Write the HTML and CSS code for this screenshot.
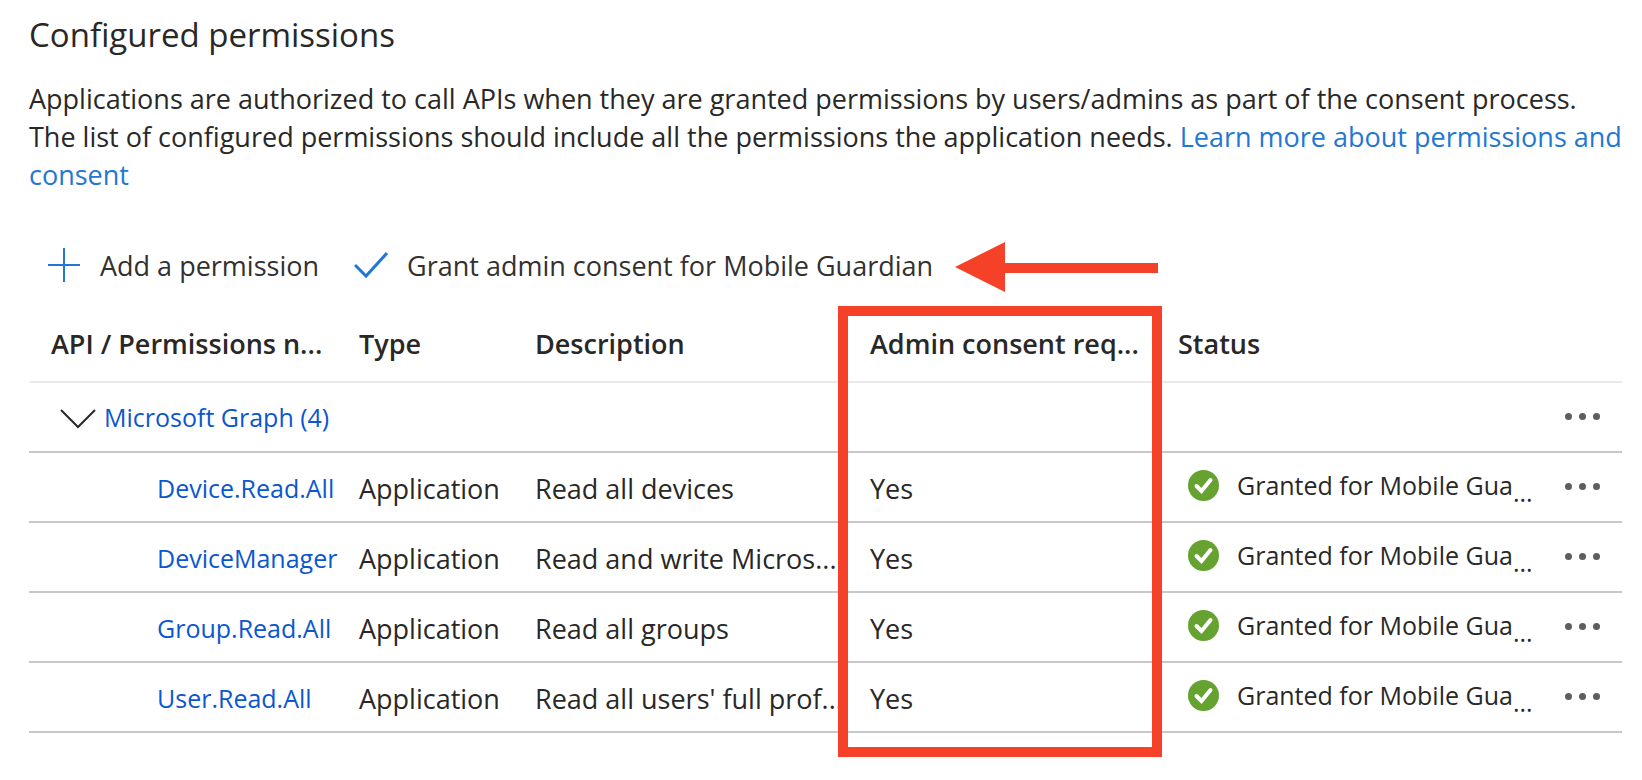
FILE: index.html
```
<!DOCTYPE html>
<html lang="en">
<head>
    <meta charset="utf-8">
    <title>Configured permissions</title>
    <link rel="stylesheet" href="styles.css">
</head>
<body>
    <h1 class="title">Configured permissions</h1>
    <p class="intro">Applications are authorized to call APIs when they are granted permissions by users/admins as part of the consent process. The list of configured permissions should include all the permissions the application needs. <a href="#">Learn more about permissions and consent</a></p>

    <div class="toolbar">
        <button class="tool">
            <svg width="34" height="34" viewBox="0 0 34 34"><path d="M17 0v34M1 17h32"/></svg>
            Add a permission
        </button>
        <button class="tool">
            <svg width="34" height="34" viewBox="0 0 34 34"><path class="tick" d="M1 17L12 28L33 5"/></svg>
            Grant admin consent for Mobile Guardian
        </button>
        <svg class="arrow" width="203" height="50" viewBox="0 0 203 50"><path d="M0 25L50 0V21H203V31H50V50Z"/></svg>
    </div>

    <div class="table-wrap">
        <table class="permissions">
            <colgroup>
                <col class="col-name">
                <col class="col-type">
                <col class="col-desc">
                <col class="col-consent">
                <col>
                <col class="col-menu">
            </colgroup>
            <thead>
                <tr>
                    <th class="name">API / Permissions n...</th>
                    <th>Type</th>
                    <th>Description</th>
                    <th>Admin consent req...</th>
                    <th>Status</th>
                    <th></th>
                </tr>
            </thead>
            <tbody>
                <tr>
                    <td colspan="5" class="group">
                        <div class="group-row">
                            <svg width="36" height="24" viewBox="0 0 36 24"><path d="M1 5L18 22L35 5"/></svg>
                            <a href="#">Microsoft Graph (4)</a>
                        </div>
                    </td>
                    <td><button class="menu"><i></i><i></i><i></i></button></td>
                </tr>
                <tr>
                    <td class="perm"><a href="#">Device.Read.All</a></td>
                    <td>Application</td>
                    <td>Read all devices</td>
                    <td>Yes</td>
                    <td><div class="status"><svg width="31" height="31" viewBox="0 0 31 31"><circle cx="15.5" cy="15.5" r="15.5"/><path d="M8.500 16L13.500 21L22.500 10"/></svg><span>Granted for Mobile Gua</span><span class="more">...</span></div></td>
                    <td><button class="menu"><i></i><i></i><i></i></button></td>
                </tr>
                <tr>
                    <td class="perm"><a href="#">DeviceManager</a></td>
                    <td>Application</td>
                    <td>Read and write Micros...</td>
                    <td>Yes</td>
                    <td><div class="status"><svg width="31" height="31" viewBox="0 0 31 31"><circle cx="15.5" cy="15.5" r="15.5"/><path d="M8.500 16L13.500 21L22.500 10"/></svg><span>Granted for Mobile Gua</span><span class="more">...</span></div></td>
                    <td><button class="menu"><i></i><i></i><i></i></button></td>
                </tr>
                <tr>
                    <td class="perm"><a href="#">Group.Read.All</a></td>
                    <td>Application</td>
                    <td>Read all groups</td>
                    <td>Yes</td>
                    <td><div class="status"><svg width="31" height="31" viewBox="0 0 31 31"><circle cx="15.5" cy="15.5" r="15.5"/><path d="M8.500 16L13.500 21L22.500 10"/></svg><span>Granted for Mobile Gua</span><span class="more">...</span></div></td>
                    <td><button class="menu"><i></i><i></i><i></i></button></td>
                </tr>
                <tr>
                    <td class="perm"><a href="#">User.Read.All</a></td>
                    <td>Application</td>
                    <td>Read all users' full prof...</td>
                    <td>Yes</td>
                    <td><div class="status"><svg width="31" height="31" viewBox="0 0 31 31"><circle cx="15.5" cy="15.5" r="15.5"/><path d="M8.500 16L13.500 21L22.500 10"/></svg><span>Granted for Mobile Gua</span><span class="more">...</span></div></td>
                    <td><button class="menu"><i></i><i></i><i></i></button></td>
                </tr>
            </tbody>
        </table>
        <div class="highlight"></div>
    </div>
</body>
</html>
```
FILE: styles.css
```
body {
    margin: 0;
    padding: 11px 20px 46px 29px;
    background: #fff;
    color: #292827;
    font-family: "Open Sans", "Noto Sans", sans-serif;
    font-size: 27px;
    line-height: 38px;
}
a {
    color: #2277d3;
    text-decoration: none;
}
button {
    border: none;
    background: none;
    padding: 0;
    color: inherit;
    font: inherit;
    cursor: pointer;
}
.title {
    margin: 0 0 21px;
    font-size: 33px;
    font-weight: 400;
    line-height: 48px;
}
.intro {
    margin: 0;
}

/* toolbar */
.toolbar {
    display: flex;
    align-items: center;
    gap: 35px;
    height: 50px;
    margin-top: 48px;
    padding-left: 18px;
}
.tool {
    display: flex;
    align-items: center;
    gap: 19px;
    padding-bottom: 2px;
    color: #323130;
    white-space: nowrap;
}
.tool svg {
    margin-bottom: 2px;
    fill: none;
    stroke: #2277d3;
    stroke-width: 2;
}
.tool .tick {
    stroke-width: 3;
}
.arrow {
    margin-left: -13px;
    fill: #f44128;
}

/* permissions table */
.table-wrap {
    position: relative;
    margin-top: 14px;
}
.permissions {
    width: 100%;
    table-layout: fixed;
    border-collapse: separate;
    border-spacing: 0;
}
.col-name { width: 330px; }
.col-type { width: 176px; }
.col-desc { width: 335px; }
.col-consent { width: 308px; }
.col-menu { width: 57px; }
.permissions th,
.permissions td {
    box-sizing: border-box;
    height: 70px;
    padding: 4px 0 0;
    border-bottom: 2px solid #c8c8c8;
    text-align: left;
    white-space: nowrap;
}
.permissions th {
    height: 77px;
    padding: 0;
    border-bottom-color: #eaeaea;
    font-weight: 600;
}
.permissions th.name {
    padding-left: 22px;
}
.permissions a {
    color: #0b57d0;
    font-size: 25px;
}
.permissions .group {
    padding: 0 0 0 31px;
}
.group-row {
    display: flex;
    align-items: center;
    gap: 8px;
}
.group-row svg {
    fill: none;
    stroke: #292827;
    stroke-width: 2;
}
.permissions .perm {
    padding: 2px 0 0 128px;
}
.status {
    display: flex;
    align-items: center;
    padding: 0 0 8px 10px;
    font-size: 25px;
}
.status svg {
    margin-right: 18px;
    fill: #65a22f;
}
.status path {
    fill: none;
    stroke: #fff;
    stroke-width: 4;
    stroke-linecap: round;
}
.status .more {
    padding-top: 14px;
}
.menu {
    display: flex;
    gap: 7px;
    padding-bottom: 6px;
}
.menu i {
    width: 7px;
    height: 7px;
    border-radius: 50%;
    background: #605e5c;
}

/* box around the admin consent column */
.highlight {
    position: absolute;
    top: 0;
    bottom: -24px;
    left: 809px;
    width: 324px;
    box-sizing: border-box;
    border: 10px solid #f44128;
    pointer-events: none;
}
```
